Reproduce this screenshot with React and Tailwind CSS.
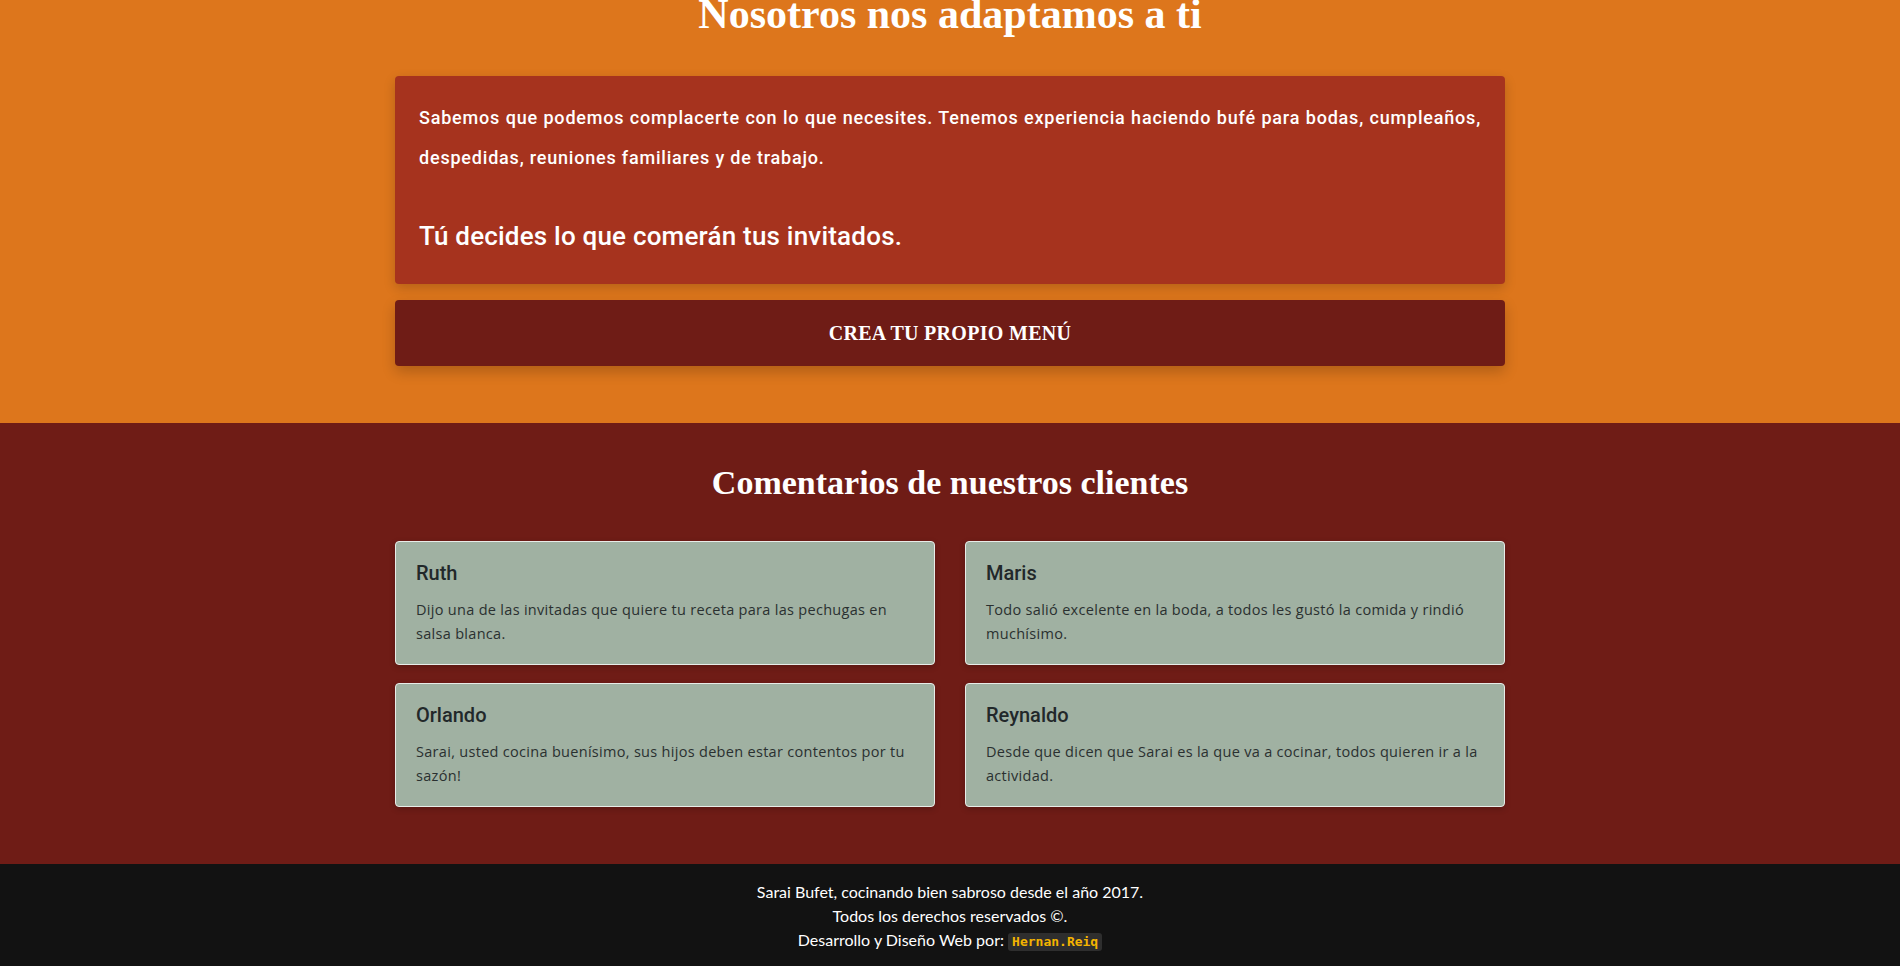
const comments = [
  { name: 'Ruth', text: 'Dijo una de las invitadas que quiere tu receta para las pechugas en salsa blanca.' },
  { name: 'Maris', text: 'Todo salió excelente en la boda, a todos les gustó la comida y rindió muchísimo.' },
  { name: 'Orlando', text: 'Sarai, usted cocina buenísimo, sus hijos deben estar contentos por tu sazón!' },
  { name: 'Reynaldo', text: 'Desde que dicen que Sarai es la que va a cocinar, todos quieren ir a la actividad.' },
]

const slab = "font-['Liberation_Serif','DejaVu_Serif',serif]"
const narrow = "font-['Roboto','Liberation_Sans',sans-serif]"

export default function App() {
  return (
    <div className="min-h-screen bg-[#121212]">
      <section className="bg-[#dd761c] pb-[57px] overflow-hidden">
        <div className="w-[1110px] mx-auto">
          <h2 className={`${slab} -mt-[10px] text-center text-[42px] leading-[48px] font-bold text-white`}>
            Nosotros nos adaptamos a ti
          </h2>

          <div className="mt-[38px] bg-[#a6331e] rounded-[4px] shadow-[0_4px_12px_rgba(0,0,0,0.18)] px-6 pt-[22px] pb-[28px]">
            <p className={`${narrow} text-white font-medium text-[18px] leading-[40px] tracking-[0.8px] text-justify`}>
              Sabemos que podemos complacerte con lo que necesites. Tenemos experiencia haciendo bufé para bodas, cumpleaños, despedidas, reuniones familiares y de trabajo.
            </p>
            <p className={`${narrow} text-white font-medium text-[26px] leading-[40px] tracking-[0.2px] mt-[38px]`}>
              Tú decides lo que comerán tus invitados.
            </p>
          </div>

          <button className={`${slab} mt-4 w-full h-[66px] bg-[#6f1c16] rounded-[4px] shadow-[0_6px_14px_rgba(0,0,0,0.2)] text-white font-bold text-[20px] tracking-[0.3px]`}>
            CREA TU PROPIO MENÚ
          </button>
        </div>
      </section>

      <section className="bg-[#6f1c16] pt-[38px] pb-[57px]">
        <div className="w-[1110px] mx-auto">
          <h2 className={`${slab} text-center text-[34px] leading-[44px] font-bold text-white`}>
            Comentarios de nuestros clientes
          </h2>
          <div className="mt-[36px] grid grid-cols-2 gap-x-[30px] gap-y-[18px]">
            {comments.map((c) => (
              <div
                key={c.name}
                className="h-[124px] bg-[#a0b1a2] border border-[#e8ece8] rounded-[4px] px-5 pt-[16px] shadow-[0_2px_6px_rgba(0,0,0,0.2)]"
              >
                <h3 className={`${narrow} text-[#22282a] font-medium text-[20px] leading-[30px]`}>{c.name}</h3>
                <p className="font-['Open_Sans','DejaVu_Sans',sans-serif] text-[#2a3030] text-[14.5px] leading-[24px] tracking-[0.3px] mt-[10px]">
                  {c.text}
                </p>
              </div>
            ))}
          </div>
        </div>
      </section>

      <footer className="bg-[#121212] pt-[16px] pb-[13px] text-center text-white font-['Lato','Open_Sans',sans-serif] text-[16px] leading-[24px]">
        <p>Sarai Bufet, cocinando bien sabroso desde el año 2017.</p>
        <p>Todos los derechos reservados ©.</p>
        <p>
          Desarrollo y Diseño Web por:{' '}
          <span className="inline-block bg-[#2e2e2e] rounded-[3px] px-[4px] leading-[18px] text-[13px] font-bold text-[#f4b400] font-['DejaVu_Sans_Mono','Liberation_Mono',monospace]">
            Hernan.Reiq
          </span>
        </p>
      </footer>
    </div>
  )
}
